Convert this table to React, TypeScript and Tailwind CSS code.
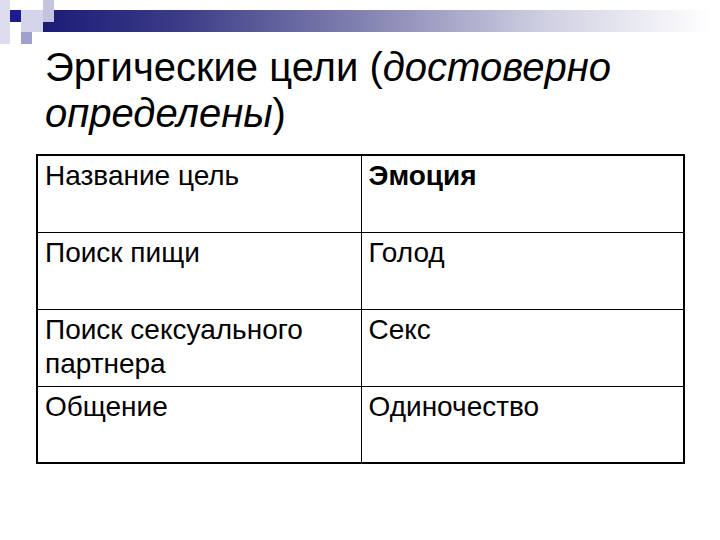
import React from "react";

const rows = [
  { goal: "Название цель", emotion: "Эмоция", head: true },
  { goal: "Поиск пищи", emotion: "Голод" },
  { goal: "Поиск сексуального партнера", emotion: "Секс" },
  { goal: "Общение", emotion: "Одиночество" },
];

export default function App() {
  return (
    <main className="w-[720px] h-[540px] bg-white text-black font-['Liberation_Sans',Arial,sans-serif] overflow-hidden">
      {/* Header decoration: pixel squares + fading bar */}
      <div className="grid grid-cols-[10px_11px_11px_11px_11px_1fr] grid-rows-[10px_12px_10px_12px] h-[44px] mr-[10px]">
        <div className="col-start-1 row-start-1 row-span-4 bg-[#dcdcee]" />
        <div className="col-start-5 col-span-2 row-start-2 row-span-2 bg-[linear-gradient(to_right,#1c1c78_0%,#3a3a86_20%,#8888b4_50%,#cfcfe2_75%,#ffffff_100%)]" />
        <div className="col-start-2 row-start-2 bg-[#1c1c8e]" />
        <div className="col-start-3 col-span-2 row-start-2 row-span-2 bg-[#d4d4ea]" />
        <div className="col-start-5 row-start-1 row-span-2 bg-[#c4c4de]" />
        <div className="col-start-3 row-start-4 bg-[#a0a0cc]" />
      </div>

      {/* Title */}
      <h1 className="pl-[45px] text-[40px] leading-[46px] font-normal">
        Эргические цели (<i>достоверно</i>
        <br />
        <i>определены</i>)
      </h1>

      {/* Table */}
      <table className="ml-[36px] mt-[18px] w-[649px] border-collapse border-2 border-black table-fixed">
        <tbody>
          {rows.map((r) => (
            <tr key={r.goal} className="h-[77px] align-top">
              <td className="border border-black w-[324px] px-[7px] pt-[3px] text-[28px] leading-[34px]">
                {r.goal}
              </td>
              <td
                className={`border border-black px-[7px] pt-[3px] text-[28px] leading-[34px] ${
                  r.head ? "font-bold" : ""
                }`}
              >
                {r.emotion}
              </td>
            </tr>
          ))}
        </tbody>
      </table>
    </main>
  );
}
